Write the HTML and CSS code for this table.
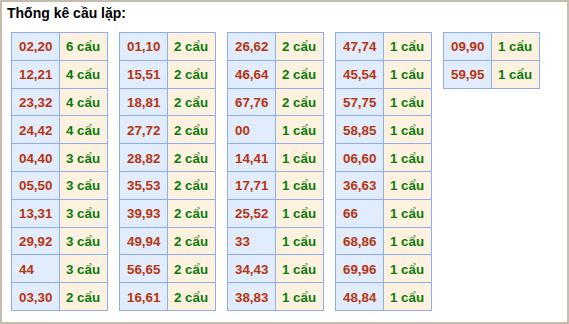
FILE: index.html
```html
<!DOCTYPE html>
<html>
<head>
<meta charset="utf-8">
<link rel="stylesheet" href="styles.css">
</head>
<body>
<div class="box">
  <div class="title">Thống kê cầu lặp:</div>
  <div class="tables">
    <table class="t">
      <tr><td class="n">02,20</td><td class="c">6 cẩu</td></tr>
      <tr><td class="n">12,21</td><td class="c">4 cẩu</td></tr>
      <tr><td class="n">23,32</td><td class="c">4 cẩu</td></tr>
      <tr><td class="n">24,42</td><td class="c">4 cẩu</td></tr>
      <tr><td class="n">04,40</td><td class="c">3 cẩu</td></tr>
      <tr><td class="n">05,50</td><td class="c">3 cẩu</td></tr>
      <tr><td class="n">13,31</td><td class="c">3 cẩu</td></tr>
      <tr><td class="n">29,92</td><td class="c">3 cẩu</td></tr>
      <tr><td class="n">44</td><td class="c">3 cẩu</td></tr>
      <tr><td class="n">03,30</td><td class="c">2 cẩu</td></tr>
    </table>
    <table class="t">
      <tr><td class="n">01,10</td><td class="c">2 cẩu</td></tr>
      <tr><td class="n">15,51</td><td class="c">2 cẩu</td></tr>
      <tr><td class="n">18,81</td><td class="c">2 cẩu</td></tr>
      <tr><td class="n">27,72</td><td class="c">2 cẩu</td></tr>
      <tr><td class="n">28,82</td><td class="c">2 cẩu</td></tr>
      <tr><td class="n">35,53</td><td class="c">2 cẩu</td></tr>
      <tr><td class="n">39,93</td><td class="c">2 cẩu</td></tr>
      <tr><td class="n">49,94</td><td class="c">2 cẩu</td></tr>
      <tr><td class="n">56,65</td><td class="c">2 cẩu</td></tr>
      <tr><td class="n">16,61</td><td class="c">2 cẩu</td></tr>
    </table>
    <table class="t">
      <tr><td class="n">26,62</td><td class="c">2 cẩu</td></tr>
      <tr><td class="n">46,64</td><td class="c">2 cẩu</td></tr>
      <tr><td class="n">67,76</td><td class="c">2 cẩu</td></tr>
      <tr><td class="n">00</td><td class="c">1 cẩu</td></tr>
      <tr><td class="n">14,41</td><td class="c">1 cẩu</td></tr>
      <tr><td class="n">17,71</td><td class="c">1 cẩu</td></tr>
      <tr><td class="n">25,52</td><td class="c">1 cẩu</td></tr>
      <tr><td class="n">33</td><td class="c">1 cẩu</td></tr>
      <tr><td class="n">34,43</td><td class="c">1 cẩu</td></tr>
      <tr><td class="n">38,83</td><td class="c">1 cẩu</td></tr>
    </table>
    <table class="t">
      <tr><td class="n">47,74</td><td class="c">1 cẩu</td></tr>
      <tr><td class="n">45,54</td><td class="c">1 cẩu</td></tr>
      <tr><td class="n">57,75</td><td class="c">1 cẩu</td></tr>
      <tr><td class="n">58,85</td><td class="c">1 cẩu</td></tr>
      <tr><td class="n">06,60</td><td class="c">1 cẩu</td></tr>
      <tr><td class="n">36,63</td><td class="c">1 cẩu</td></tr>
      <tr><td class="n">66</td><td class="c">1 cẩu</td></tr>
      <tr><td class="n">68,86</td><td class="c">1 cẩu</td></tr>
      <tr><td class="n">69,96</td><td class="c">1 cẩu</td></tr>
      <tr><td class="n">48,84</td><td class="c">1 cẩu</td></tr>
    </table>
    <table class="t">
      <tr><td class="n">09,90</td><td class="c">1 cẩu</td></tr>
      <tr><td class="n">59,95</td><td class="c">1 cẩu</td></tr>
    </table>
  </div>
</div>
</body>
</html>
```
FILE: styles.css
```css
html, body {
  margin: 0;
  padding: 0;
  background: #fff;
}
.box {
  box-sizing: border-box;
  width: 569px;
  height: 324px;
  border: 2px solid #c6bcae;
  padding: 3px 0 0 5px;
  font-family: "Liberation Sans", Arial, sans-serif;
}
.title {
  font-weight: bold;
  font-size: 14px;
  line-height: 17px;
  color: #000;
}
.tables {
  display: flex;
  align-items: flex-start;
  gap: 11px;
  margin: 10px 0 0 4px;
}
.t {
  border-collapse: collapse;
  font-size: 13.33px;
  font-weight: bold;
}
.t td {
  border: 1px solid #8eaef0;
  width: 48px;
  height: 27.8px;
  padding: 1px 0 0 6px;
  box-sizing: border-box;
  text-align: left;
  vertical-align: middle;
}
.t td.n {
  background: #e1edfd;
  color: #b8330f;
  padding-left: 7px;
}
.t td.c {
  background: #fdf2e0;
  color: #0a7a0a;
}
```
